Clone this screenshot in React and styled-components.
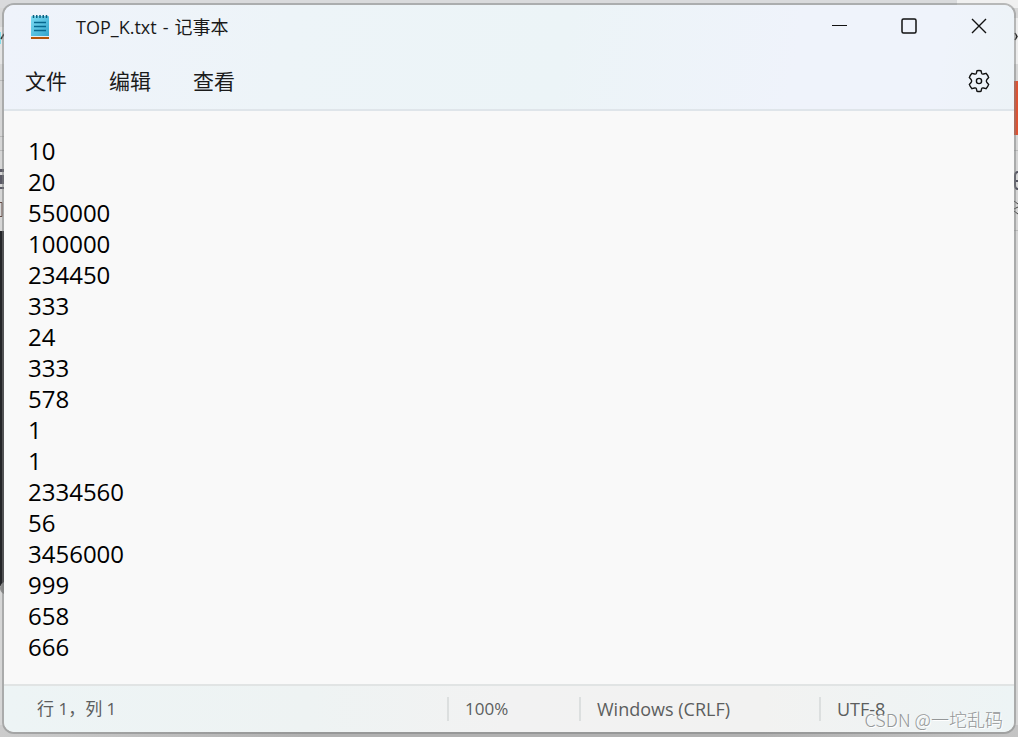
import React from "react";
import styled, { createGlobalStyle } from "styled-components";

const GlobalStyle = createGlobalStyle`
  *, *::before, *::after { box-sizing: border-box; }
  body {
    margin: 0;
    font-family: "Open Sans", "Noto Sans CJK SC", sans-serif;
    color: #1a1a1a;
  }
`;

const Desktop = styled.main`
  position: relative;
  display: flex;
  min-height: 100vh;
  padding: 3px 2px;
  overflow: hidden;
  background: linear-gradient(90deg, #d9dadc 0 94%, #f0f0f0 94%) top / 100% 8px no-repeat,
    linear-gradient(90deg, #cccccc, #b1b1b1 30% 75%, #c4c4c4) bottom / 100% 12px no-repeat,
    #d6d6d6;
`;

const Backdrop = styled.svg`
  position: absolute;
  top: 0;
  ${(p) => (p.$side === "left" ? "left: 0;" : "right: 0;")}
`;

const Window = styled.section`
  position: relative;
  display: flex;
  flex: 1;
  flex-direction: column;
  min-width: 0;
  overflow: hidden;
  border: 2px solid rgba(125, 128, 128, 0.5);
  border-radius: 12px;
  background: #f9f9f9 padding-box;
`;

const Header = styled.header`
  border-bottom: 2px solid #dfe5ea;
  background: linear-gradient(100deg, #eff3fb 0%, #edf4f8 28%, #ecf4f7 55%, #eff3fb 78%, #eff3fb 92%, #edf3f7 100%);
`;

const TitleBar = styled.div`
  display: flex;
  align-items: center;
  height: 44px;
  padding-left: 26px;
`;

const Title = styled.h1`
  display: flex;
  flex: 1;
  gap: 6px;
  margin: 0 0 0 26px;
  font-size: 18px;
  font-weight: 400;
  line-height: 24px;
`;

const IconButton = styled.button`
  display: flex;
  align-items: center;
  justify-content: center;
  width: 70px;
  height: 42px;
  padding: 0;
  border: 0;
  background: transparent;
  color: #111;
`;

const MenuBar = styled.nav`
  display: flex;
  align-items: center;
  height: 60px;
  padding: 4px 0 0 11px;
`;

const MenuButton = styled.button`
  width: 84px;
  height: 42px;
  padding: 0 10px;
  border: 0;
  background: transparent;
  color: #1b1b1b;
  font: inherit;
  font-size: 21px;
  line-height: 30px;
  text-align: left;
`;

const Spacer = styled.div`
  flex: 1;
`;

const Editor = styled.textarea`
  display: block;
  flex: 1;
  width: 100%;
  padding: 24px 24px 20px;
  border: 0;
  outline: 0;
  resize: none;
  overflow: hidden;
  background: #f9f9f9;
  color: #000;
  font: inherit;
  font-size: 24px;
  line-height: 31px;
`;

const StatusBar = styled.footer`
  display: flex;
  align-items: center;
  height: 48px;
  border-top: 2px solid #e1e4e4;
  background: linear-gradient(90deg, #edf4f5 0%, #eef3f3 30%, #f2f2f2 50%, #f2f2f1 75%, #edf4f5 100%);
  color: #5c5e5e;
  font-size: 18px;
  line-height: 24px;
`;

const StatusItem = styled.span`
  flex: ${(p) => (p.$width ? `0 0 ${p.$width}px` : "1")};
  padding-left: ${(p) => (p.$first ? 33 : 16)}px;
  border-left: ${(p) => (p.$first ? "0" : "2px solid #dcdfdf")};
  font-size: ${(p) => (p.$numeric ? 17 : 18)}px;
  white-space: nowrap;
`;

const Watermark = styled.div`
  position: absolute;
  right: 15px;
  bottom: 6px;
  color: #949798;
  font-family: "Noto Sans CJK SC", sans-serif;
  font-size: 18px;
  font-weight: 300;
  line-height: 24px;
  text-shadow: 1px 1px 0 #fff;
`;

const NotepadIcon = () => (
  <svg width="20" height="26" viewBox="0 0 20 26" aria-hidden="true">
    <defs>
      <linearGradient id="page" x1="0" y1="0" x2="1" y2="1">
        <stop offset="0" stopColor="#7ddcf3" />
        <stop offset="1" stopColor="#35a5cd" />
      </linearGradient>
    </defs>
    <path d="M1 21h18v3.500q0 .5-.5.500h-17q-.5 0-.5-.5z" fill="#b35309" />
    <path d="M1 21h18v2H1z" fill="#e8eef0" />
    <path d="M1 3q0-1 1-1h16q1 0 1 1v19H1z" fill="url(#page)" />
    <path d="M3.500 1v3M6.750 1v3M10 1v3M13.250 1v3M16.500 1v3" stroke="#0b5f7e" strokeWidth="1.500" />
    <path d="M4 8.500h12M4 12.500h12M4 16.500h12" stroke="#07678e" strokeWidth="1.700" />
  </svg>
);

const GearIcon = () => (
  <svg width="24" height="24" viewBox="0 0 24 24" fill="none" stroke="currentColor" strokeWidth="1.400" strokeLinejoin="round" aria-hidden="true">
    <path d="M10 1.700Q12 1.200 14 1.700L14.600 4.200Q15.100 5.400 16.500 5L19 4.300Q20.900 6.200 21.700 8.600L19.900 10.400Q18.700 12 19.900 13.600L21.700 15.400Q20.900 17.800 19 19.700L16.500 19Q15.100 18.600 14.600 19.800L14 22.300Q12 22.800 10 22.300L9.400 19.800Q8.900 18.600 7.500 19L5 19.700Q3.100 17.800 2.300 15.400L4.100 13.600Q5.300 12 4.100 10.400L2.300 8.600Q3.100 6.200 5 4.300L7.500 5Q8.900 5.400 9.400 4.200Z" />
    <circle cx="12" cy="12" r="2.600" />
  </svg>
);

const lines = [
  "10", "20", "550000", "100000", "234450", "333", "24", "333", "578",
  "1", "1", "2334560", "56", "3456000", "999", "658", "666",
];

export default function App() {
  return (
    <>
      <GlobalStyle />
      <Desktop>
        <Backdrop $side="left" width="4" height="737" aria-hidden="true">
          <path d="M0 27h4v37H0z" fill="#e4e4e4" />
          <path d="M0 32h1v12H0z" fill="#7fdcea" />
          <path d="M1 39L4 34" stroke="#333" strokeWidth="1.500" />
          <path d="M0 80.500h4M0 136.500h4M0 150.500h4" stroke="#b9b9b9" />
          <path d="M0 169h4v3H0zM0 175h4v9H0zM0 187h4v2H0z" fill="#5b5a66" />
          <path d="M0 202.500h2v14H0" fill="none" stroke="#664b45" />
          <path d="M0 231h4v355H0z" fill="#242529" />
          <path d="M4 582Q0 584 0 588Q0 592 4 594z" fill="#8d8d8d" />
        </Backdrop>
        <Backdrop $side="right" width="6" height="737" aria-hidden="true">
          <path d="M1 18h5v46H1z" fill="#ececec" />
          <path d="M3 33l2 3.500-2 3.500" fill="none" stroke="#222" strokeWidth="1.500" />
          <path d="M2 81h4v54H2z" fill="#dd5233" />
          <path d="M2 150.500h4M2 230.500h4" stroke="#b9b9b9" />
          <path d="M6 172Q3 172 3 176v9q0 4 3 4M3 181h3" fill="none" stroke="#555562" strokeWidth="2" />
          <path d="M2 201l4 3M2 209l4-2M2 211l4 3" stroke="#444" />
        </Backdrop>
        <Window>
          <Header>
            <TitleBar>
              <NotepadIcon />
              <Title>
                <span>TOP_K.txt</span>
                <span>-</span>
                <span>记事本</span>
              </Title>
              <IconButton aria-label="最小化">
                <svg width="16" height="18" aria-hidden="true"><path d="M1 7.500h15" stroke="currentColor" /></svg>
              </IconButton>
              <IconButton aria-label="最大化">
                <svg width="16" height="18" aria-hidden="true"><rect x="1" y="1" width="14" height="14" rx="1.500" fill="none" stroke="currentColor" strokeWidth="1.500" /></svg>
              </IconButton>
              <IconButton aria-label="关闭">
                <svg width="16" height="18" aria-hidden="true"><path d="M1 1l14 14M15 1L1 15" stroke="currentColor" strokeWidth="1.400" /></svg>
              </IconButton>
            </TitleBar>
            <MenuBar>
              <MenuButton>文件</MenuButton>
              <MenuButton>编辑</MenuButton>
              <MenuButton>查看</MenuButton>
              <Spacer />
              <IconButton aria-label="设置"><GearIcon /></IconButton>
            </MenuBar>
          </Header>
          <Editor aria-label="文本编辑器" rows={17} spellCheck={false} defaultValue={lines.join("\n")} />
          <StatusBar>
            <StatusItem $first $numeric>行 1，列 1</StatusItem>
            <StatusItem $numeric $width={132}>100%</StatusItem>
            <StatusItem $width={240}>Windows (CRLF)</StatusItem>
            <StatusItem $width={195}>UTF-8</StatusItem>
          </StatusBar>
        </Window>
        <Watermark>CSDN @一坨乱码</Watermark>
      </Desktop>
    </>
  );
}
